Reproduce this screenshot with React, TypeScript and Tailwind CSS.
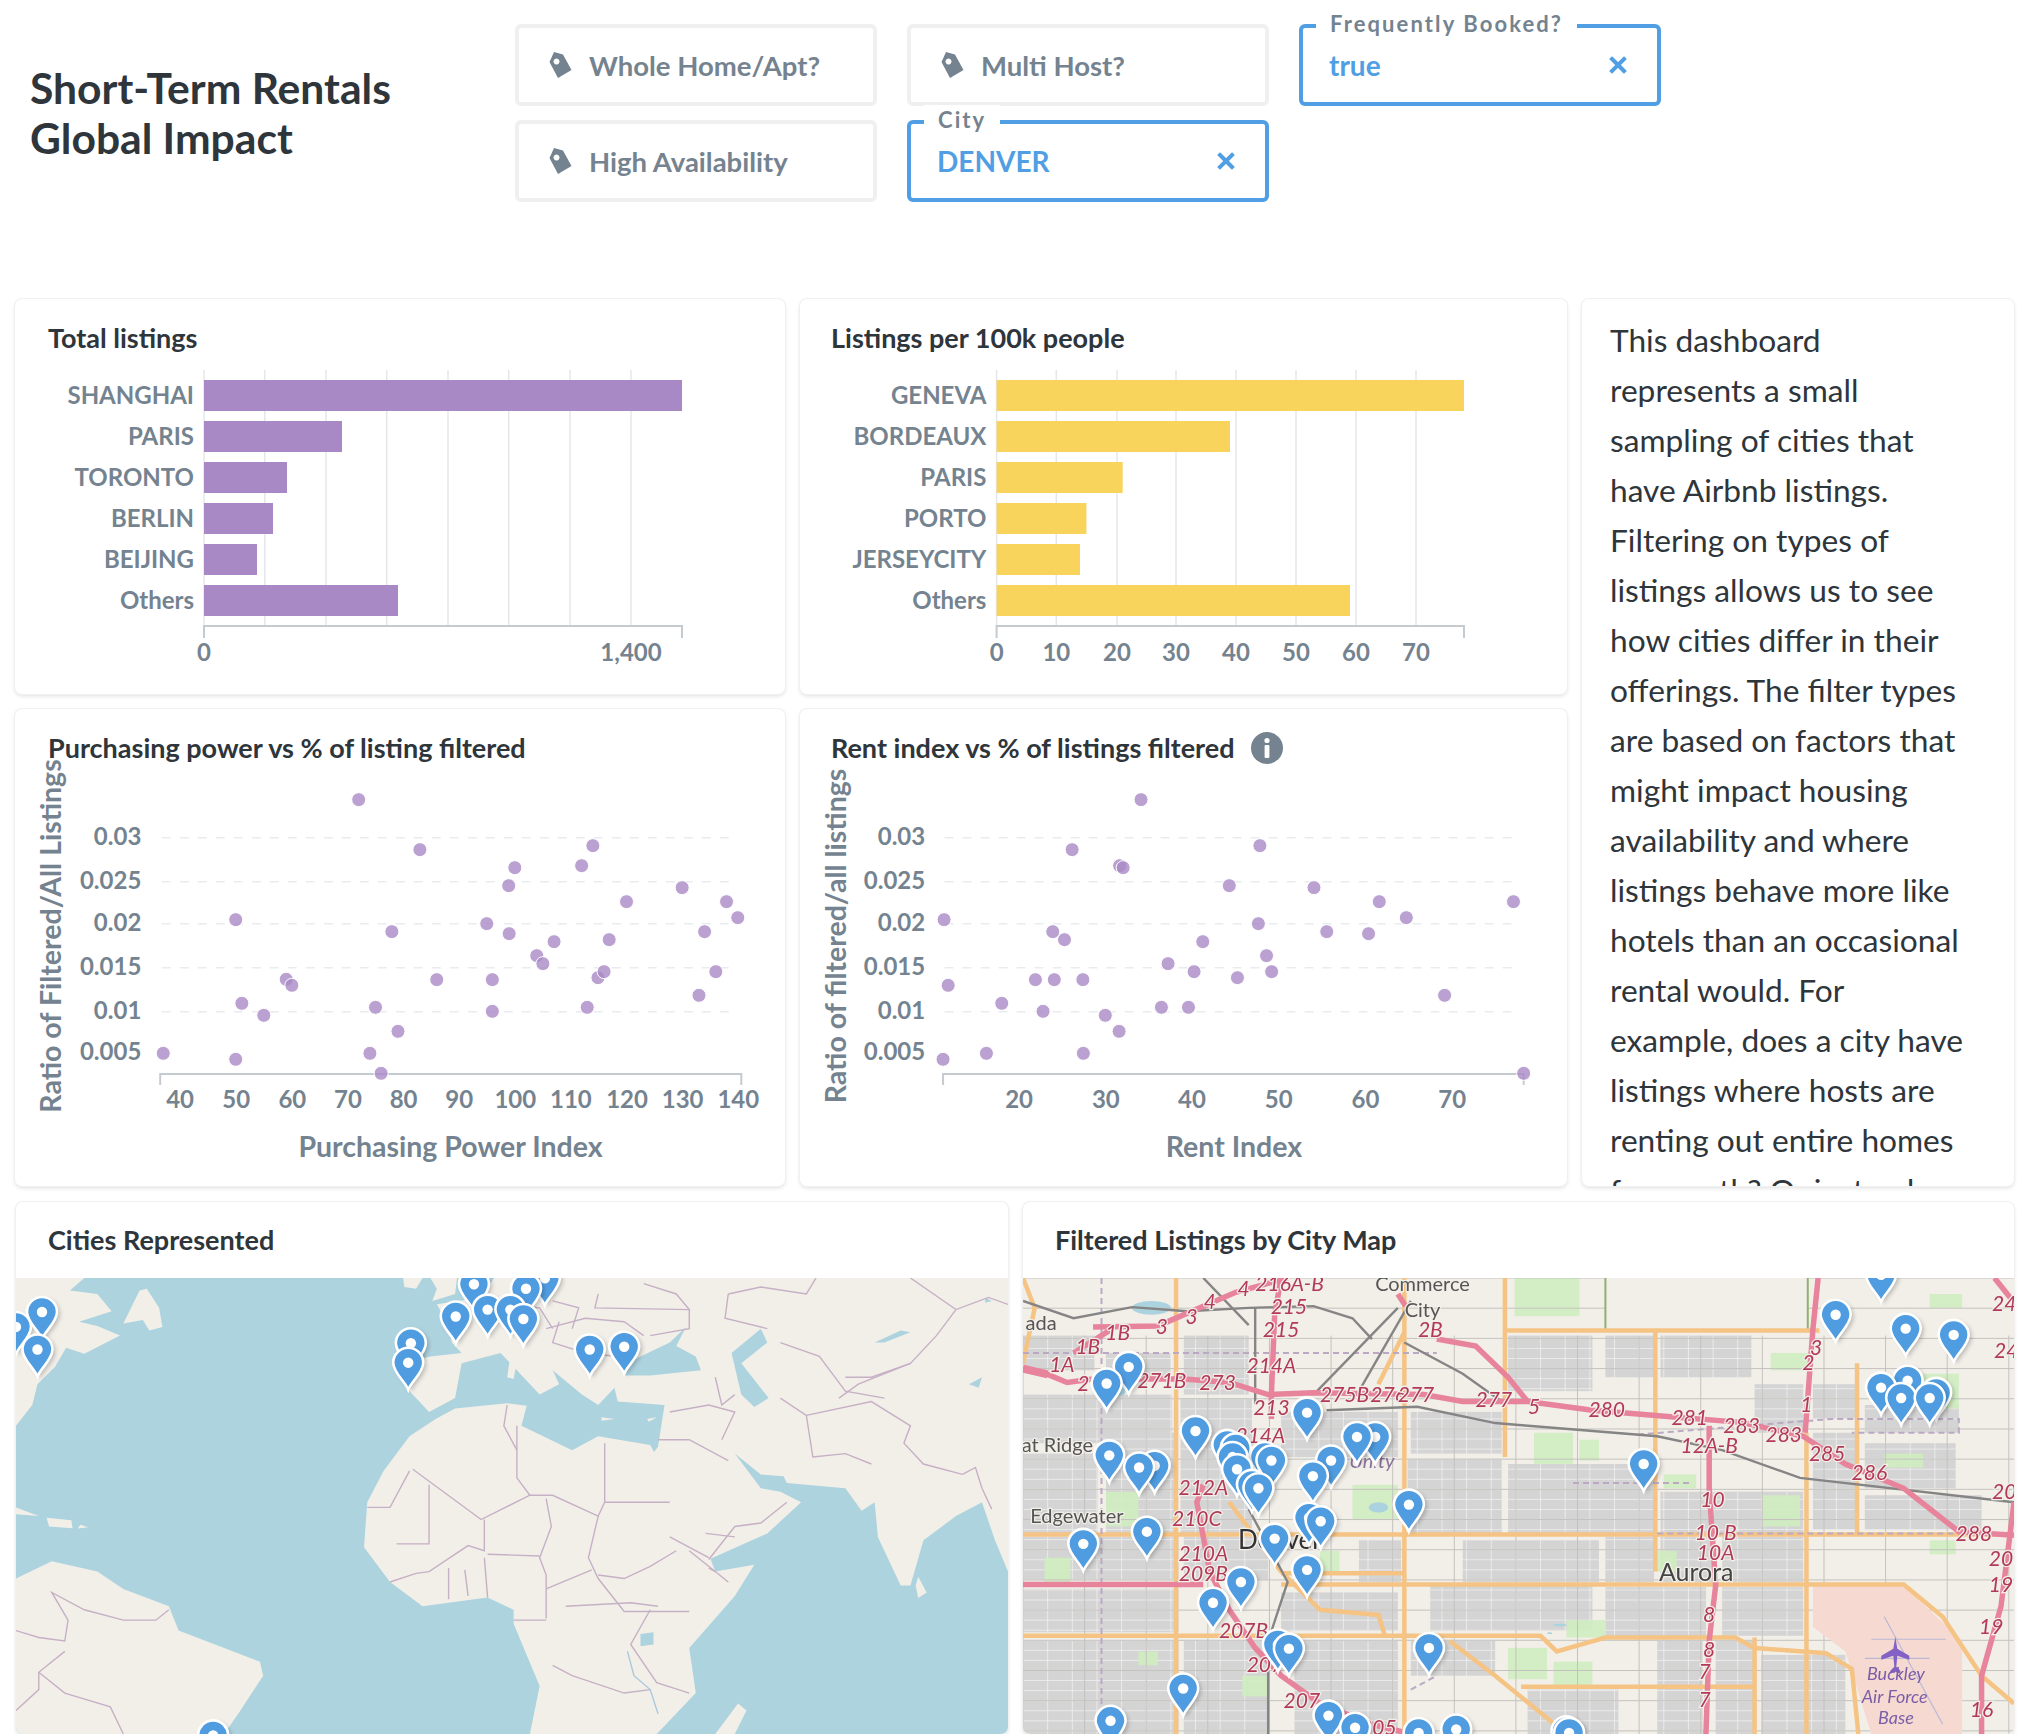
import React from "react";

const GRAY = "#74838f";
const PURPLE = "#a989c5";

const Card = ({ className = "", children }: { className?: string; children: React.ReactNode }) => (
  <div className={`rounded-[7px] bg-white shadow-[0_0_0_1px_#f0f0f0,0_2px_4px_rgba(0,0,0,0.13)] ${className}`}>{children}</div>
);

const CardTitle = ({ className = "pl-[33px]", children }: { className?: string; children: React.ReactNode }) => (
  <div className={`flex h-[30px] items-center gap-[16px] text-[27px] font-bold leading-[30px] text-[#2e353b] ${className}`}>{children}</div>
);

const TagIcon = () => (
  <svg width="30" height="30" viewBox="0 0 28 30" className="shrink-0">
    <path
      fillRule="evenodd"
      fill={GRAY}
      d="M9 2 L18 4.5 L26.5 20 L13 28 L4.5 12 Z M11.5 8.5 a3 3 0 1 0 0.01 0 Z"
    />
  </svg>
);

const XIcon = () => (
  <svg width="18" height="18" viewBox="0 0 18 18" className="shrink-0">
    <path d="M3 3 L15 15 M15 3 L3 15" stroke="#509ee3" strokeWidth="4" strokeLinecap="square" />
  </svg>
);

const FilterOff = ({ label }: { label: string }) => (
  <div className="flex h-[82px] w-[362px] items-center gap-[15px] rounded-[6px] border-4 border-[#f0f0f0] pl-[25px] text-[27.5px] font-bold text-[#74838f]">
    <TagIcon />
    <span className="pt-[1px]">{label}</span>
  </div>
);

const FilterOn = ({ label, value }: { label: string; value: string }) => (
  <div className="relative flex h-[82px] w-[362px] items-center justify-between rounded-[6px] border-4 border-[#509ee3] pl-[26px] pr-[30px] text-[28px] font-bold text-[#509ee3]">
    <span className="absolute left-[13px] top-[-19px] bg-white px-[14px] text-[22px] font-bold leading-[30px] tracking-[2.1px] text-[#74838f]">{label}</span>
    <span>{value}</span>
    <XIcon />
  </div>
);

type Bar = [string, number];

const BarChart = ({ x0, x1, top, left, width, height, color, grid, ticks, bars, labelX }: {
  x0: number; x1: number; top: number; left: number; width: number; height: number; color: string;
  grid: number[]; ticks: [number, string][]; bars: Bar[]; labelX: number;
}) => (
  <svg width={width} height={height} viewBox={`${left} ${top} ${width} ${height}`} className="block overflow-visible">
    {grid.map((g) => (
      <line key={g} x1={g} x2={g} y1={370} y2={626} stroke="#e4e7ea" strokeWidth="1.5" />
    ))}
    {bars.map(([name, end], i) => (
      <g key={name}>
        <rect x={x0} y={380 + i * 41} width={end - x0} height={31} fill={color} />
        <text x={labelX} y={404 + i * 41} textAnchor="end" className="fill-[#74838f] text-[24px] font-bold">{name}</text>
      </g>
    ))}
    <path d={`M${x0} 638 V626 H${x1} V638`} fill="none" stroke="#c4cbd0" strokeWidth="2" />
    {ticks.map(([x, t]) => (
      <text key={t} x={x} y={661} textAnchor="middle" className="fill-[#74838f] text-[24px] font-bold">{t}</text>
    ))}
  </svg>
);

const Y_TICKS: [number, string][] = [[413, "0.03"], [545, "0.025"], [671, "0.02"], [803, "0.015"], [935, "0.01"], [1060, "0.005"]];

const Scatter = ({ left, origin, width, points, axis, gridX, xTicks, xLabel, xLabelX, yLabel, yLabelX, yTickX }: {
  left: number; origin: number; width: number; points: number[][]; axis: [number, number]; gridX: [number, number];
  xTicks: [number, string][]; xLabel: string; xLabelX: number; yLabel: string; yLabelX: number; yTickX: number;
}) => {
  const X = (z: number) => origin + z / 1.96;
  const Y = (z: number) => 700 + z / 3;
  return (
    <svg width={width} height={423} viewBox={`${left} 763 ${width} 423`} className="block overflow-visible">
      {Y_TICKS.slice(0, 5).map(([y]) => (
        <line key={y} x1={X(gridX[0])} x2={X(gridX[1])} y1={Y(y)} y2={Y(y)} stroke="#e9ecee" strokeWidth="1.5" strokeDasharray="9 9" />
      ))}
      {Y_TICKS.map(([y, t]) => (
        <text key={t} x={X(yTickX)} y={Y(y) + 7} textAnchor="end" className="fill-[#74838f] text-[24px] font-bold">{t}</text>
      ))}
      <path d={`M${X(axis[0])} ${Y(1155)} V${Y(1122)} H${X(axis[1])} V${Y(1155)}`} fill="none" stroke="#c4cbd0" strokeWidth="2" />
      {xTicks.map(([x, t]) => (
        <text key={t} x={X(x)} y={Y(1200) + 8} textAnchor="middle" className="fill-[#74838f] text-[24px] font-bold">{t}</text>
      ))}
      {points.map(([x, y], i) => (
        <circle key={i} cx={X(x)} cy={Y(y)} r="7" fill={PURPLE} fillOpacity="0.8" stroke="#fff" strokeWidth="1" />
      ))}
      <text x={X(xLabelX)} y={Y(1345) + 9} textAnchor="middle" className="fill-[#74838f] text-[28.5px] font-bold">{xLabel}</text>
      <text transform={`translate(${X(yLabelX)} 936) rotate(-90)`} textAnchor="middle" dominantBaseline="middle" className="fill-[#74838f] text-[28.5px] font-bold">{yLabel}</text>
    </svg>
  );
};

const Pin = ({ x, y }: { x: number; y: number }) => (
  <g transform={`translate(${x} ${y})`}>
    <path d="M3 29 C0 21 -12 12 -12 2 A15 15 0 1 1 18 2 C18 12 6 21 3 29 Z" fill="#000" fillOpacity="0.22" filter="url(#pinshadow)" />
    <path d="M0 27 C-3 19 -15 10 -15 0 A15 15 0 1 1 15 0 C15 10 3 19 0 27 Z" fill="#4f9ce0" stroke="#fff" strokeWidth="2.6" />
    <circle cx="0" cy="0" r="5.2" fill="#fff" />
  </g>
);

const Shadow = () => (
  <defs>
    <filter id="pinshadow" x="-50%" y="-50%" width="200%" height="200%">
      <feGaussianBlur stdDeviation="2.2" />
    </filter>
  </defs>
);

/* ---------- world map, traced in 1525×1314 source units ---------- */
const LAND = [
  "M25 254 L130 254 L108 290 L150 300 L172 350 L122 380 L150 392 L185 420 L130 472 L102 455 L85 510 L58 560 L50 620 L25 680 Z",
  "M190 385 L215 290 L226 285 L245 340 L250 395 L230 405 L220 375 Z",
  "M25 915 L60 940 L25 935 Z M72 945 L110 952 L112 975 L76 970 Z M124 965 L136 972 L120 976 Z",
  "M620 254 L650 254 L640 285 L622 280 Z M662 254 L703 254 L700 300 L665 320 L672 285 Z",
  "M760 254 L1550 254 L1550 1100 L1530 1010 L1510 900 L1470 940 L1420 1010 L1400 1140 L1385 1140 L1350 1000 L1345 900 L1325 925 L1300 860 L1210 845 L1205 825 L1170 820 L1130 760 L1170 860 L1200 870 L1232 900 L1180 990 L1090 1065 L1040 950 L1000 770 L1012 740 L1022 620 L950 610 L945 570 L920 620 L895 590 L850 520 L860 560 L830 590 L795 520 L770 470 L710 500 L700 600 L660 640 L640 600 L630 580 L640 490 L662 480 L710 470 L695 440 L690 390 L672 330 L740 310 Z",
  "M670 660 L700 630 L780 615 L810 622 L802 680 L880 750 L920 710 L1000 735 L1010 770 L1040 880 L1090 1050 L1100 1100 L1160 1080 L1130 1170 L1060 1320 L1070 1450 L1010 1568 L815 1568 L830 1430 L790 1250 L790 1210 L750 1175 L650 1200 L600 1130 L560 1030 L565 900 L590 810 L630 710 Z",
  "M25 1120 L80 1070 L150 1100 L190 1150 L260 1200 L275 1270 L400 1360 L405 1400 L370 1500 L345 1568 L25 1568 Z",
  "M1135 1480 L1148 1500 L1130 1568 L1100 1568 Z",
  "M1412 1115 L1425 1160 L1412 1176 L1408 1140 Z",
  "M784 490 L795 495 L790 545 L780 540 Z M925 655 L945 660 L925 665 Z M995 660 L1010 655 L998 668 Z",
];
const SEAS = [
  "M985 480 L1030 440 L1055 395 L1040 450 L1070 480 L1078 520 L1000 535 L960 535 L955 510 Z",
  "M1125 470 L1170 400 L1180 440 L1140 500 L1182 600 L1160 626 L1140 590 Z",
  "M1345 440 L1385 405 L1400 410 L1360 440 Z M1490 560 L1510 540 L1505 570 Z M1515 310 L1525 320 L1515 325 Z",
  "M985 1280 L1005 1275 L1005 1310 L985 1315 Z",
];
const BORDERS = [
  "M635 805 L740 950 L815 880 L850 880 L920 940 L930 900 L1030 900",
  "M930 730 L930 900", "M795 680 L795 830 L815 880", "M660 850 L660 1020 L610 1020",
  "M745 950 L745 1040 L720 1025 L660 1100 L640 1105 L600 1130",
  "M840 890 L848 970 L830 1060 L840 1110 L840 1235",
  "M920 940 L905 1060 L920 1120 L960 1215 L1060 1215",
  "M840 1150 L910 1095", "M870 1200 L970 1190 L1012 1200",
  "M1000 1210 L970 1310 L1010 1420 L1060 1450",
  "M1030 1000 L1090 1060", "M1040 1040 L1000 1085 L960 1120 L920 1110",
  "M750 1050 L830 1055", "M745 1060 L750 1175", "M790 1240 L840 1240",
  "M850 1370 L880 1400 L960 1450 L1000 1440", "M690 1090 L690 1180", "M715 1095 L720 1170",
  "M565 915 L600 915 L630 810", "M780 620 L775 680 L795 750", "M1060 1040 L1120 1130",
  "M1012 720 L1060 720 L1120 780", "M1030 640 L1090 620 L1130 640 L1110 720", "M1100 540 L1110 620 L1130 590",
  "M1200 600 L1240 650 L1250 770 L1300 760 L1340 790", "M1240 650 L1340 610 L1400 680 L1390 730 L1420 790 L1480 820",
  "M1090 1065 L1130 970 L1170 960 L1210 900", "M1085 990 L1130 1000",
  "M920 300 L915 340 L1060 345 L1040 300 L990 270", "M1120 300 L1170 280 L1240 300 L1255 254",
  "M1120 300 L1115 370 L1180 400", "M1200 440 L1260 480 L1300 580 L1360 600", "M1400 254 L1470 345 L1520 310 L1550 330",
  "M1470 345 L1440 420 L1400 500 L1340 540 L1300 540", "M1400 500 L1320 560 L1290 600",
  "M840 400 L900 370 L960 380 L990 420", "M850 320 L890 340 L880 400", "M25 1270 L60 1290 L100 1300 L105 1240 L80 1160 L130 1210 L190 1240 L240 1240 L260 1210",
  "M60 1390 L100 1450 L170 1490 L190 1568", "M25 1500 L60 1440 L60 1390 L100 1330", "M1480 820 L1500 800 L1510 860 L1525 920",
  "M1090 1090 L1100 1100", "M860 380 L850 440 L900 470", "M900 470 L950 480", "M760 330 L830 340 L850 400", "M1060 345 L1060 400 L1000 420",
];

const WORLD_PINS = [[25, 395], [65, 352], [58, 460], [632, 442], [628, 498], [838, 255], [729, 272], [701, 365], [809, 285], [750, 345], [785, 345], [805, 372], [907, 460], [960, 452], [328, 1572]];

const WorldMap = () => {
  const w = 992, h = 456, sx = w / 1525, sy = h / 1314;
  return (
    <svg width={w} height={h} className="block rounded-b-[7px] blur-[0.5px]">
      <Shadow />
      <rect width={w} height={h} fill="#add3df" />
      <g transform={`scale(${sx} ${sy}) translate(-25 -254)`}>
        {LAND.map((d, i) => <path key={i} d={d} fill="#f2efe9" />)}
        {SEAS.map((d, i) => <path key={i} d={d} fill="#add3df" />)}
        {BORDERS.map((d, i) => <path key={i} d={d} fill="none" stroke="#c6b0c5" strokeWidth="1.4" vectorEffect="non-scaling-stroke" />)}
        <path d="M965 1330 L975 1400 L1000 1440 L1012 1510" fill="none" stroke="#a9c8dc" strokeWidth="1.4" vectorEffect="non-scaling-stroke" />
      </g>
      {WORLD_PINS.map(([x, y], i) => <Pin key={i} x={(x - 25) * sx} y={(y - 254) * sy} />)}
    </svg>
  );
};

/* ---------- city map, traced in 1528×1314 source units ---------- */
const GRAY_BLOCKS = [
  [22, 420, 110, 100], [22, 590, 230, 140], [150, 470, 100, 70], [22, 760, 115, 230], [150, 700, 105, 290], [265, 600, 110, 390],
  [615, 775, 145, 215], [770, 790, 225, 200], [1005, 870, 220, 120], [920, 1000, 75, 130], [1005, 1000, 80, 130], [1100, 1000, 125, 130],
  [920, 1145, 155, 145], [1100, 1145, 125, 140], [420, 1160, 180, 110], [540, 1010, 65, 120], [1150, 560, 75, 140],
  [22, 1300, 240, 268], [270, 1300, 130, 268], [920, 420, 75, 120], [1005, 420, 140, 120], [1240, 560, 65, 100], [1320, 620, 145, 80],
  [700, 1010, 210, 120], [650, 1140, 250, 130], [1000, 1300, 70, 268], [1090, 1300, 60, 268], [1160, 1340, 130, 228], [800, 1440, 140, 128],
  [420, 640, 180, 130], [770, 420, 130, 160], [620, 640, 140, 120], [22, 1000, 240, 125], [22, 1150, 240, 125], [270, 1000, 130, 125], [1240, 700, 65, 280], [1320, 730, 140, 130], [1320, 880, 180, 100],
  [270, 420, 100, 170], [440, 1300, 160, 268], [620, 1300, 130, 100],
];
const ORANGE = [
  "M258 254 V1568", "M610 254 V1568", "M765 254 V770", "M997 405 V1100", "M1230 700 V1568", "M1308 500 V990", "M1150 1290 V1568",
  "M22 993 H1550", "M420 1105 H610", "M420 1137 H1380 L1440 1230 L1500 1400 L1550 1480", "M22 1285 H820 L845 1330 L920 1290 H1120 L1150 1320 L1260 1335 L1300 1380 L1310 1568",
  "M765 405 H1250", "M790 1432 H1150", "M22 254 L40 340 L22 500", "M340 900 L420 1100 L480 1210 L570 1225 L580 1285", "M680 1300 L750 1400 L860 1568",
  "M610 410 L570 560",
];
const PINK = [
  "M22 515 L60 532 L90 555 L130 545 L270 545 L340 555 L400 590 L470 585 L640 590 L700 610 L800 610 L900 635 L1030 655 L1130 670 L1225 710 L1290 790 L1380 860 L1465 985 L1550 995",
  "M405 590 L410 360 L420 254", "M405 590 L405 660", "M300 850 L290 900 L310 1100 L340 1210 L380 1320 L420 1400 L480 1480 L560 1540 L620 1568",
  "M22 1137 H300", "M600 300 L612 335", "M660 430 L720 450 L770 540 L800 610", "M130 395 L230 392 L350 295 L430 254", "M100 470 L160 400",
  "M1080 680 L1080 860 L1090 1140 L1080 1300 L1075 1568", "M1248 254 L1240 400 L1228 700", "M1520 254 L1548 320", "M1550 900 L1530 1200 L1500 1400 L1500 1568",
];
const RAILS = [
  "M490 635 L630 625 L750 672 L1000 710 L1100 750 L1220 830 L1550 900", "M22 320 L100 370 L190 338 L275 350", "M275 350 L370 340 L470 335 L530 370 L560 430",
  "M470 590 L600 340", "M380 620 V340", "M540 580 L620 320", "M300 254 L370 390", "M610 440 L700 530 L760 610", "M370 920 L430 1130 L400 1300 L400 1568",
];
const PURPLE_LINES = ["M22 470 H660", "M970 705 L1270 660 L1465 660 V700 H1300", "M870 845 L1050 845", "M1000 990 H1550", "M143 254 V1568", "M620 1440 L660 1400"];
const GREENS = [
  [530, 850, 70, 100], [810, 700, 60, 90], [1010, 820, 50, 40], [1175, 470, 60, 50], [1405, 530, 60, 100], [1000, 1040, 30, 60], [780, 254, 100, 110],
  [770, 1320, 60, 90], [840, 1360, 60, 70], [860, 1240, 60, 50], [55, 1060, 40, 70], [1160, 880, 60, 90], [480, 1040, 30, 60], [150, 870, 50, 100],
  [880, 720, 30, 60], [1350, 760, 60, 40], [1420, 300, 50, 40], [360, 1400, 40, 60], [200, 1330, 30, 40], [1420, 1010, 40, 40],
];
const WATERS = [[190, 320, 60, 40], [130, 560, 50, 40], [940, 330, 15, 30], [1030, 290, 12, 20], [840, 1250, 20, 8], [830, 1275, 8, 5], [555, 900, 30, 30]];
const EXITS: [number, number, string][] = [
  [433, 270, "216A-B"], [432, 338, "215"], [420, 405, "215"], [405, 508, "214A"], [405, 628, "213"], [362, 285, "4"], [310, 322, "4"], [282, 365, "3"], [236, 395, "3"],
  [168, 413, "1B"], [122, 452, "1B"], [82, 505, "1A"], [236, 552, "271B"], [322, 558, "273"], [518, 592, "275B"], [585, 592, "276"], [628, 590, "277"], [748, 605, "277"],
  [810, 625, "5"], [922, 635, "280"], [1050, 658, "281"], [1130, 680, "283"], [1195, 705, "283"], [1262, 760, "285"], [1327, 815, "286"], [1080, 738, "12A-B"], [1085, 895, "10"],
  [1090, 990, "10 B"], [1090, 1045, "10A"], [1488, 992, "288"], [650, 405, "2B"], [1245, 455, "3"], [1233, 500, "2"], [1230, 620, "1"], [1535, 330, "24"], [1538, 465, "24"],
  [1535, 870, "20"], [1530, 1065, "20"], [1530, 1140, "19"], [1515, 1260, "19"], [1500, 1500, "16"], [1080, 1225, "8"], [1080, 1325, "8"], [1073, 1388, "7"], [1073, 1470, "7"],
  [300, 858, "212A"], [290, 948, "210C"], [300, 1050, "210A"], [300, 1108, "209B"], [362, 1272, "207B"], [452, 1472, "207"], [570, 1550, "205"], [115, 560, "2"], [388, 710, "214A"], [395, 1368, "207"],
];
const CITY_PINS = [
  [1275, 360], [1345, 245], [1383, 400], [1457, 418], [1386, 550], [1430, 585], [1345, 570], [1376, 600], [1420, 600], [185, 510], [151, 558], [460, 642], [565, 712], [537, 712], [288, 695],
  [225, 795], [155, 765], [201, 800], [337, 735], [350, 745], [395, 770], [345, 770], [405, 780], [352, 805], [375, 850], [385, 860], [497, 780], [469, 825], [463, 945], [481, 955], [617, 907],
  [979, 790], [213, 985], [115, 1020], [410, 1005], [460, 1095], [358, 1130], [315, 1190], [415, 1310], [432, 1322], [648, 1320], [269, 1437], [157, 1530], [493, 1515], [534, 1550], [632, 1565], [690, 1555], [860, 1560], [864, 1565],
];

const PLACES: [number, number, string, string, number][] = [
  [638, 270, "Commerce", "fill-[#555] text-[20px] [paint-order:stroke]", 7],
  [638, 347, "City", "fill-[#555] text-[20px] [paint-order:stroke]", 7],
  [50, 385, "ada", "fill-[#555] text-[20px] [paint-order:stroke]", 7],
  [75, 735, "at Ridge", "fill-[#555] text-[20px] [paint-order:stroke]", 7],
  [105, 940, "Edgewater", "fill-[#555] text-[20px] [paint-order:stroke]", 7],
  [1060, 1102, "Aurora", "fill-[#444] text-[25px] [paint-order:stroke]", 9],
  [418, 1005, "Denver", "fill-[#333] text-[26px] [paint-order:stroke]", 10],
];

const CityMap = () => {
  const w = 991, h = 456, sx = w / 1528, sy = h / 1314;
  const X = (x: number) => (x - 22) * sx;
  const Y = (y: number) => (y - 254) * sy;
  const vLines = Array.from({ length: 82 }, (_, i) => 22 + i * 19);
  const hLines = Array.from({ length: 92 }, (_, i) => 254 + i * 14.5);
  return (
    <svg width={w} height={h} className="block rounded-b-[7px] blur-[0.6px]">
      <Shadow />
      <clipPath id="blocks">
        {GRAY_BLOCKS.map(([x, y, bw, bh], i) => <rect key={i} x={X(x)} y={Y(y)} width={bw * sx} height={bh * sy} />)}
      </clipPath>
      <rect width={w} height={h} fill="#f2efe9" />
      {GRAY_BLOCKS.map(([x, y, bw, bh], i) => <rect key={i} x={X(x)} y={Y(y)} width={bw * sx} height={bh * sy} fill="#d4d4d4" />)}
      <g clipPath="url(#blocks)" stroke="#f4f4f4" strokeOpacity="0.7" strokeWidth="1">
        {vLines.filter((_, i) => i % 2 === 0).map((v) => <line key={v} x1={X(v)} x2={X(v)} y1={0} y2={h} />)}
        {hLines.filter((_, i) => i % 2 === 0).map((v) => <line key={v} x1={0} x2={w} y1={Y(v)} y2={Y(v)} />)}
      </g>
      {GREENS.map(([x, y, bw, bh], i) => <rect key={i} x={X(x)} y={Y(y)} width={bw * sx} height={bh * sy} fill="#cfecc0" fillOpacity="0.9" />)}
      {WATERS.map(([x, y, bw, bh], i) => <ellipse key={i} cx={X(x + bw / 2)} cy={Y(y + bh / 2)} rx={(bw * sx) / 2} ry={(bh * sy) / 2} fill="#aad3df" />)}
      <g stroke="#c4c2be" strokeWidth="1">
        {vLines.filter((_, i) => i % 5 === 0).map((v) => <line key={v} x1={X(v)} x2={X(v)} y1={Y(420)} y2={h} />)}
        {hLines.filter((_, i) => i % 6 === 0).map((v) => <line key={v} x1={0} x2={w} y1={Y(v)} y2={Y(v)} />)}
      </g>
      <rect x={X(920)} y={-4} width={312 * sx} height={Y(405) + 4} fill="#f2efe9" stroke="#8fb06e" strokeWidth="2" />
      <path d={`M${X(1240)} ${Y(1140)} L${X(1380)} ${Y(1140)} L${X(1470)} ${Y(1300)} L${X(1470)} ${h} L${X(1330)} ${h} L${X(1290)} ${Y(1330)} L${X(1240)} ${Y(1260)} Z`} fill="#f6d9d0" />
      <path d={`M${X(1350)} ${Y(1230)} L${X(1440)} ${Y(1540)} M${X(1330)} ${Y(1295)} H${X(1445)} M${X(1320)} ${Y(1350)} H${X(1420)}`} stroke="#b9b9d6" strokeWidth="1.2" fill="none" />
      <g transform={`scale(${sx} ${sy}) translate(-22 -254)`} fill="none">
        {ORANGE.map((d, i) => <path key={i} d={d} stroke="#f5c383" strokeWidth="4.5" vectorEffect="non-scaling-stroke" />)}
        {PURPLE_LINES.map((d, i) => <path key={i} d={d} stroke="#bba9c4" strokeWidth="2" strokeDasharray="6 4" vectorEffect="non-scaling-stroke" />)}
        {RAILS.map((d, i) => <path key={i} d={d} stroke="#858585" strokeWidth="2.4" vectorEffect="non-scaling-stroke" />)}
        {PINK.map((d, i) => <path key={i} d={d} stroke="#e8839c" strokeWidth="5.5" vectorEffect="non-scaling-stroke" />)}
        <path d="M22 515 L60 532" stroke="#e8839c" strokeWidth="8" vectorEffect="non-scaling-stroke" />
      </g>
      <path d={`M${X(1367)} ${Y(1288)} l2 12 l12 7 v4 l-12 -4 l-1 11 l4 4 v3 l-5 -2 l-5 2 v-3 l4 -4 l-1 -11 l-12 4 v-4 l12 -7 Z`} fill="#8461c4" />
      {EXITS.map(([x, y, t], i) => (
        <text key={i} x={X(x)} y={Y(y) + 7} textAnchor="middle" stroke="#f2efe9" strokeWidth="2.5" className="fill-[#b23a58] text-[21px] italic [paint-order:stroke]">{t}</text>
      ))}
      {PLACES.map(([x, y, t, c, d]) => (
        <text key={t} x={X(x)} y={Y(y) + d} textAnchor="middle" stroke="#f2efe9" strokeWidth="2.5" className={c}>{t}</text>
      ))}
      <text x={X(560)} y={Y(780) + 7} textAnchor="middle" className="fill-[#8a6f9a] text-[20px] italic">Unity</text>
      {[[1368, 1395, "Buckley"], [1366, 1460, "Air Force"], [1368, 1522, "Base"]].map(([x, y, t]) => (
        <text key={t as string} x={X(x as number)} y={Y(y as number) + 6} textAnchor="middle" className="fill-[#7a5ea8] text-[18px] italic">{t as string}</text>
      ))}
      {CITY_PINS.map(([x, y], i) => <Pin key={i} x={X(x)} y={Y(y)} />)}
    </svg>
  );
};

const P1 = [[703,299],[823,449],[1162,437],[1140,497],[1009,503],[997,557],[1337,563],[1228,605],[1424,605],[1446,653],[462,659],[954,671],[768,695],[998,701],[1381,695],[1086,725],[1194,719],[1052,767],[1064,791],[1172,833],[1184,815],[1403,815],[561,838],[572,856],[856,839],[965,839],[474,910],[736,922],[1151,922],[1370,886],[965,934],[517,946],[780,994],[320,1060],[725,1060],[462,1078],[747,1120]];
const P2 = [[688,299],[553,449],[921,437],[646,497],[653,503],[861,557],[1027,563],[1155,605],[1418,605],[1208,653],[302,659],[918,671],[515,695],[1052,695],[1134,701],[538,719],[809,725],[741,791],[934,767],[792,815],[944,815],[481,839],[518,839],[574,839],[877,833],[310,856],[415,910],[728,922],[781,922],[1283,886],[496,934],[618,946],[645,994],[385,1060],[575,1060],[300,1078],[1438,1120]];

const INTRO = [
  "This dashboard", "represents a small", "sampling of cities that", "have Airbnb listings.", "Filtering on types of", "listings allows us to see",
  "how cities differ in their", "offerings. The filter types", "are based on factors that", "might impact housing", "availability and where",
  "listings behave more like", "hotels than an occasional", "rental would. For", "example, does a city have", "listings where hosts are", "renting out entire homes", "for month? Or instead",
];

export default function App() {
  return (
    <div className="h-[1734px] w-[2026px] overflow-hidden bg-white [font-family:Lato,sans-serif]">
      <header className="flex h-[299px] pl-[30px] pt-[24px]">
        <h1 className="mt-[39px] w-[485px] text-[42.6px] font-bold leading-[50px] text-[#2e353b]">
          Short-Term Rentals<br />Global Impact
        </h1>
        <div className="flex w-[1160px] flex-wrap content-start gap-x-[30px] gap-y-[14px]">
          <FilterOff label="Whole Home/Apt?" />
          <FilterOff label="Multi Host?" />
          <FilterOn label="Frequently Booked?" value="true" />
          <FilterOff label="High Availability" />
          <FilterOn label="City" value="DENVER" />
        </div>
      </header>
      <main className="px-[15px]">
        <div className="grid grid-cols-[770px_767px_432px] grid-rows-[395px_477px] gap-x-[15px] gap-y-[15px]">
          <Card className="pt-[24px]">
            <CardTitle>Total listings</CardTitle>
            <BarChart left={15} top={353} width={770} height={341} x0={204} x1={682} color="#a989c5"
              grid={[204, 264.8, 326, 386.7, 448, 508.7, 570, 631]} ticks={[[204, "0"], [631, "1,400"]]} labelX={194}
              bars={[["SHANGHAI", 682], ["PARIS", 342], ["TORONTO", 287], ["BERLIN", 273], ["BEIJING", 257], ["Others", 398]]} />
          </Card>
          <Card className="pt-[24px]">
            <CardTitle className="pl-[31px]">Listings per 100k people</CardTitle>
            <BarChart left={800} top={353} width={767} height={341} x0={996.6} x1={1464} color="#f9d45c"
              grid={[996.6, 1056.3, 1117, 1176, 1236, 1296, 1356, 1416]} labelX={986.4}
              ticks={[[996.6, "0"], [1056.3, "10"], [1117, "20"], [1176, "30"], [1236, "40"], [1296, "50"], [1356, "60"], [1416, "70"]]}
              bars={[["GENEVA", 1464], ["BORDEAUX", 1230], ["PARIS", 1122.7], ["PORTO", 1086.4], ["JERSEYCITY", 1080], ["Others", 1350]]} />
          </Card>
          <Card className="row-span-2 overflow-hidden pl-[28px] pt-[16px]">
            {INTRO.map((line) => (
              <p key={line} className="whitespace-nowrap text-[31.7px] leading-[50px] text-[#2e353b]">{line}</p>
            ))}
          </Card>
          <Card className="pt-[24px]">
            <CardTitle>Purchasing power vs % of listing filtered</CardTitle>
            <Scatter left={15} origin={0} width={770} points={P1} axis={[314, 1453]} gridX={[317, 1435]} yTickX={277}
              xTicks={[[353, "40"], [463, "50"], [573, "60"], [682, "70"], [791, "80"], [900, "90"], [1010, "100"], [1119, "110"], [1229, "120"], [1338, "130"], [1447, "140"]]}
              xLabel="Purchasing Power Index" xLabelX={883} yLabel="Ratio of Filtered/All Listings" yLabelX={106} />
          </Card>
          <Card className="pt-[24px]">
            <CardTitle className="pl-[31px]">
              Rent index vs % of listings filtered
              <svg width="32" height="32" viewBox="0 0 32 32">
                <circle cx="16" cy="16" r="16" fill={GRAY} />
                <circle cx="16" cy="8.5" r="2.6" fill="#fff" />
                <rect x="13.6" y="13" width="4.8" height="13" rx="1" fill="#fff" />
              </svg>
            </CardTitle>
            <Scatter left={800} origin={790} width={767} points={P2} axis={[300, 1438]} gridX={[303, 1420]} yTickX={265}
              xTicks={[[449, "20"], [619, "30"], [788, "40"], [958, "50"], [1128, "60"], [1298, "70"]]}
              xLabel="Rent Index" xLabelX={870} yLabel="Ratio of filtered/all listings" yLabelX={95} />
          </Card>
        </div>
        <div className="ml-[1px] mt-[16px] grid grid-cols-[992px_991px] gap-x-[15px]">
          <Card>
            <div className="flex h-[76px] items-center pl-[32px] text-[27px] font-bold text-[#2e353b]">Cities Represented</div>
            <WorldMap />
          </Card>
          <Card>
            <div className="flex h-[76px] items-center pl-[32px] text-[27px] font-bold text-[#2e353b]">Filtered Listings by City Map</div>
            <CityMap />
          </Card>
        </div>
      </main>
    </div>
  );
}
